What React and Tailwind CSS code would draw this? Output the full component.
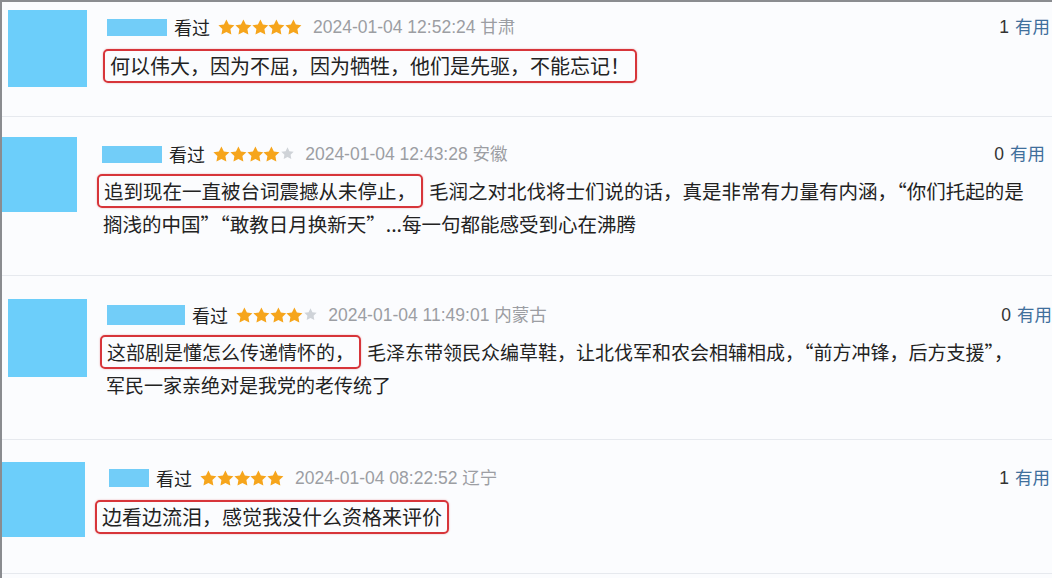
const reviews = [
  {
    box: 'h-[115px]',
    avatar: 'mt-[8px] ml-[6px] w-[79px] h-[77px]',
    content: 'ml-[16px] pt-[15px]',
    name: 'ml-[4px] w-[60px] h-[17px]',
    stars: 5,
    time: '2024-01-04 12:52:24',
    place: '甘肃',
    useful: 1,
    right: 'pr-[2px]',
    body: 'mt-[12px] text-[20px]',
    boxed: '何以伟大，因为不屈，因为牺牲，他们是先驱，不能忘记！',
    rest: '',
    line2: '',
  },
  {
    box: 'h-[159px]',
    avatar: 'mt-[20px] ml-0 w-[75px] h-[75px]',
    content: 'ml-[20px] pt-[27px]',
    name: 'ml-[5px] w-[60px] h-[17px]',
    stars: 4,
    time: '2024-01-04 12:43:28',
    place: '安徽',
    useful: 0,
    right: 'pr-[7px]',
    body: 'mt-[10px] text-[19.5px]',
    boxed: '追到现在一直被台词震撼从未停止，',
    rest: '毛润之对北伐将士们说的话，真是非常有力量有内涵，“你们托起的是',
    line2: '搁浅的中国”“敢教日月换新天”...每一句都能感受到心在沸腾',
  },
  {
    box: 'h-[164px]',
    avatar: 'mt-[23px] ml-[6px] w-[79px] h-[78px]',
    content: 'ml-[13px] pt-[29px]',
    name: 'ml-[7px] w-[78px] h-[20px]',
    stars: 4,
    time: '2024-01-04 11:49:01',
    place: '内蒙古',
    useful: 0,
    right: 'pr-0',
    body: 'mt-[10px] text-[19px]',
    boxed: '这部剧是懂怎么传递情怀的，',
    rest: '毛泽东带领民众编草鞋，让北伐军和农会相辅相成，“前方冲锋，后方支援”，',
    line2: '军民一家亲绝对是我党的老传统了',
  },
  {
    box: 'h-[134px]',
    avatar: 'mt-[22px] ml-0 w-[83px] h-[75px]',
    content: 'ml-[10px] pt-[28px]',
    name: 'ml-[14px] w-[40px] h-[18px]',
    stars: 5,
    time: '2024-01-04 08:22:52',
    place: '辽宁',
    useful: 1,
    right: 'pr-[2px]',
    body: 'mt-[12px] text-[20px]',
    boxed: '边看边流泪，感觉我没什么资格来评价',
    rest: '',
    line2: '',
  },
];

const cjk = "font-['Noto_Sans_CJK_SC',sans-serif]";
const latin = "font-['Liberation_Sans','Noto_Sans_CJK_SC',sans-serif]";

function Star({ on }) {
  return (
    <svg
      viewBox="1.5 1.5 21 21"
      className={on ? 'w-[16.8px] h-[16.8px] fill-[#f6a51c]' : 'ml-[1px] w-[13px] h-[13px] fill-[#cfd3d8]'}
    >
      <path d="M12 2l3.09 6.26L22 9.27l-5 4.87 1.18 6.88L12 17.77l-6.18 3.25L7 14.14 2 9.27l6.91-1.01L12 2z" />
    </svg>
  );
}

function Review({ r }) {
  return (
    <div className={`flex border-b border-[#e6e9ee] ${r.box}`}>
      <div className={`shrink-0 bg-[#6ccefa] ${r.avatar}`} />
      <div className={`flex-1 flex flex-col ${r.content}`}>
        <div className={`flex items-center justify-between h-[20px] ${r.right}`}>
          <div className="flex items-center">
            <div className={`bg-[#72cdf8] ${r.name}`} />
            <span className={`ml-[7px] text-[18px] text-[#222] ${cjk}`}>看过</span>
            <div className="ml-[8px] flex items-center">
              {[0, 1, 2, 3, 4].map((i) => (
                <Star key={i} on={i < r.stars} />
              ))}
            </div>
            <span className={`ml-[11px] text-[17.5px] text-[#9c9ea3] ${latin}`}>
              {r.time} {r.place}
            </span>
          </div>
          <div className={`text-[17.5px] ${latin}`}>
            <span className="text-[#333]">{r.useful}</span>
            <span className="ml-[6px] text-[#3f6f9c]">有用</span>
          </div>
        </div>
        <div className={`text-[#222] leading-[32px] ${cjk} ${r.body}`}>
          <div className="flex items-center whitespace-nowrap">
            <span className="inline-block border-2 border-[#d7353a] rounded-[5px] px-[5px] leading-[30px] shadow-[0_0_2px_rgba(215,53,58,0.4)]">
              {r.boxed}
            </span>
            {r.rest && <span className="ml-[6px]">{r.rest}</span>}
          </div>
          {r.line2 && <div className="whitespace-nowrap pl-[6px]">{r.line2}</div>}
        </div>
      </div>
    </div>
  );
}

export default function App() {
  return (
    <div className="w-[1052px] h-[578px] overflow-hidden bg-[#fbfcfe] border-t-2 border-l-2 border-[#8a8c90]">
      {reviews.map((r, i) => (
        <Review key={i} r={r} />
      ))}
    </div>
  );
}
